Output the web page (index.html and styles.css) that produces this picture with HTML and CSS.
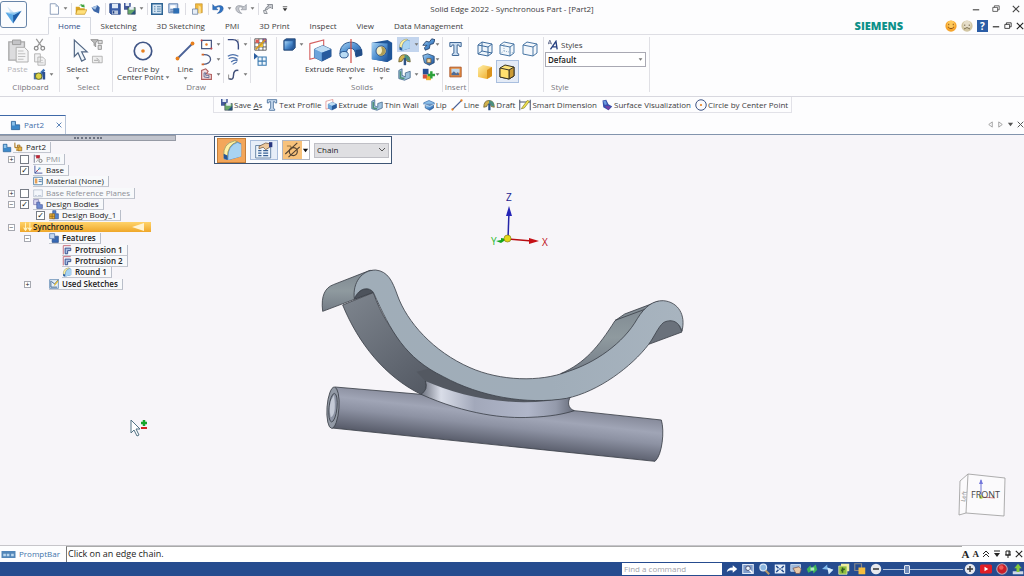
FILE: index.html
```html
<!DOCTYPE html>
<html lang="en">
<head>
<meta charset="utf-8">
<title>Solid Edge 2022 - Synchronous Part - [Part2]</title>
<link rel="stylesheet" href="styles.css">
</head>
<body>
<svg class="defs" aria-hidden="true">
  <defs>
    <linearGradient id="blue" x1="0" y1="0" x2="1" y2="1"><stop offset="0" stop-color="#a9d4f3"/><stop offset=".5" stop-color="#4f8fd0"/><stop offset="1" stop-color="#1d4f96"/></linearGradient>
    <linearGradient id="gold" x1="0" y1="0" x2="1" y2="1"><stop offset="0" stop-color="#fff0a8"/><stop offset="1" stop-color="#eda41c"/></linearGradient>
    <linearGradient id="tubeFill" gradientUnits="userSpaceOnUse" x1="560" y1="664" x2="545" y2="796"><stop offset="0" stop-color="#878b9b"/><stop offset=".3" stop-color="#a0a5b6"/><stop offset=".55" stop-color="#8d92a3"/><stop offset="1" stop-color="#585c6a"/></linearGradient>
    <linearGradient id="faceFill" x1="0" y1="0" x2="1" y2="0"><stop offset="0" stop-color="#a0adb8"/><stop offset=".6" stop-color="#a0adb9"/><stop offset="1" stop-color="#a8b4bf"/></linearGradient>
    <linearGradient id="curlFill" x1="0" y1="0" x2="0" y2="1"><stop offset="0" stop-color="#7d8790"/><stop offset=".5" stop-color="#8f9a9f"/><stop offset="1" stop-color="#737b86"/></linearGradient>
    <linearGradient id="underFill" x1="0" y1="0" x2="1" y2="1"><stop offset="0" stop-color="#7f868f"/><stop offset=".6" stop-color="#5f656f"/><stop offset="1" stop-color="#4b505a"/></linearGradient>
    <linearGradient id="filletFill" x1="0" y1="0" x2="1" y2="0"><stop offset="0" stop-color="#6b707d"/><stop offset=".13" stop-color="#d9dde8"/><stop offset=".35" stop-color="#a2a8ba"/><stop offset=".7" stop-color="#b0b6c9"/><stop offset=".88" stop-color="#949aab"/><stop offset="1" stop-color="#666b79"/></linearGradient>
  </defs>
  <symbol id="i-app" viewBox="0 0 26 26"><path d="M5 3l8 7-3 3z" fill="#cfe4f5"/><path d="M3 10l10 2-1 11z" fill="#5aa9e6"/><path d="M12 12l10-4-10 15z" fill="#1e5ea9"/><path d="M3 10l10 3 9-5-9 2z" fill="#8cc6ef"/></symbol>
  <symbol id="i-new" viewBox="0 0 16 16"><path d="M3 1h7l4 4v10H3z" fill="#fff" stroke="#6f84a5"/><path d="M10 1v4h4z" fill="#aebfd6"/></symbol>
  <symbol id="i-open" viewBox="0 0 16 16"><path d="M1 5h5l1 2h6v8H1z" fill="#d9a321"/><path d="M3 9h13l-3 6H1z" fill="#ffe07a" stroke="#b98410" stroke-width=".7"/><path d="M5 4q3-4 6-1l1-2 1 5-5-1 1-1q-2-2-4 0z" fill="#3aa23c"/></symbol>
  <symbol id="i-blob" viewBox="0 0 16 16"><path d="M2 6l8-3 3 3-1 8-7-3z" fill="#3b66a8"/><path d="M2 6l8-3-3 6z" fill="#a9c5e6"/></symbol>
  <symbol id="i-save" viewBox="0 0 16 16"><path d="M1 1h14v14H3l-2-2z" fill="#3c5fa8" stroke="#1d3b7c"/><path d="M4 1h8v6H4z" fill="#dfe9f6"/><path d="M4 10h8v5H4z" fill="#b9c7dd"/><path d="M5 11h2v3H5z" fill="#1d3b7c"/></symbol>
  <symbol id="i-saveas" viewBox="0 0 16 16"><path d="M0 0h9v9H0z" fill="#43599a"/><path d="M2 0h5v4H2z" fill="#e3ebf6"/><path d="M5 6h10v9H5z" fill="#67a86a" stroke="#335" stroke-width=".7"/><path d="M7 5h6v4H7z" fill="#e8eef7"/><path d="M9 15l6-6v6z" fill="#28547e"/></symbol>
  <symbol id="i-list" viewBox="0 0 16 16"><path d="M1 1h14v14H1z" fill="#d7e7f4" stroke="#2f6595" stroke-width="2"/><path d="M4 5h2M8 5h5M4 8h2M8 8h5M4 11h2M8 11h5" stroke="#2f6595"/></symbol>
  <symbol id="i-print" viewBox="0 0 16 16"><path d="M1 1h12v12H1z" fill="#c3d5ee" stroke="#46699e"/><path d="M3 3h7v4H3z" fill="#fff"/><path d="M7 7h8v7H7z" fill="#2d6fb5"/><path d="M3 9h6M3 11h6" stroke="#46699e"/></symbol>
  <symbol id="i-book" viewBox="0 0 16 16"><path d="M6 1h9v12H6z" fill="#f2bb3e" stroke="#b57a14" stroke-width=".7"/><path d="M2 8h7v7H2z" fill="#e6eef8" stroke="#687f9e"/><path d="M10 3l3 2v10l-3-2z" fill="#fbe09a"/></symbol>
  <symbol id="i-undo" viewBox="0 0 16 16"><path d="M1 2v7h7L5.500 6.500Q11 3 11 8q0 3-4 6 8-1 8-7-1-6-11-2z" fill="#2f74c4" stroke="#1d4c90" stroke-width=".6"/></symbol>
  <symbol id="i-redo" viewBox="0 0 16 16"><path d="M15 2v7H8l2.500-2.500Q5 3 5 8q0 3 4 6-8-1-8-7 1-6 11-2z" fill="#c5c8ce" stroke="#858a93" stroke-width=".8"/></symbol>
  <symbol id="i-repeat" viewBox="0 0 16 16"><path d="M7 2h7v6l-2-2q-4 0-5 3H4q2-5 5-5z" fill="#c9ccd1" stroke="#70757e"/><path d="M2 10h3l2 4H3z" fill="#e4e5e8" stroke="#70757e"/></symbol>
  <symbol id="i-paste" viewBox="0 0 24 26"><path d="M2 3h17v20H2z" fill="#dcdcde" stroke="#aaa" stroke-width="1.500"/><path d="M6 1h9v5H6z" fill="#c4c4c7" stroke="#999"/><path d="M10 9h9l4 4v12H10z" fill="#f4f4f5" stroke="#aaa"/><path d="M12 13h6M12 16h8M12 19h8M12 22h6" stroke="#bbb"/></symbol>
  <symbol id="i-cut" viewBox="0 0 16 16"><path d="M4 1l7 10M12 1L5 11" stroke="#999" stroke-width="1.500"/><circle cx="4" cy="12.500" r="2.300" fill="none" stroke="#888" stroke-width="1.500"/><circle cx="12" cy="12.500" r="2.300" fill="none" stroke="#888" stroke-width="1.500"/></symbol>
  <symbol id="i-copy" viewBox="0 0 16 16"><path d="M2 1h7v10H2zM6 5h6l3 3v7H6z" fill="#f2f2f3" stroke="#aaa"/><path d="M8 9h4M8 12h5" stroke="#bbb"/></symbol>
  <symbol id="i-painter" viewBox="0 0 16 16"><path d="M1 6h10v8H1z" fill="#4b6da8"/><circle cx="7" cy="10" r="4" fill="#ddd448" stroke="#556017"/><path d="M9 5l4-4 2 2-5 5z" fill="#3f73b8"/><path d="M11 5h4v9h-3z" fill="#2c4f8f"/></symbol>
  <symbol id="i-arrow" viewBox="0 0 24 30"><path d="M8 3v18l4-4 4 9 4-2-4-8h6z" fill="#f1f6fb" stroke="#526784" stroke-width="1.300"/></symbol>
  <symbol id="i-filter" viewBox="0 0 16 16"><path d="M1 2h9L7 6v5L5 9V6z" fill="#bbb" stroke="#888"/><path d="M10 3h5v4h-5zM10 9h4v5h-4z" fill="#ddd" stroke="#888"/></symbol>
  <symbol id="i-box" viewBox="0 0 16 16"><path d="M3 4h12v8H3z" fill="#eee" stroke="#aaa"/><path d="M5 9h5M8 6l3 3v3" stroke="#999" fill="none"/></symbol>
  <symbol id="i-circle" viewBox="0 0 24 24"><circle cx="12" cy="12" r="10.500" fill="#fbfbfd" stroke="#3f5586" stroke-width="2"/><circle cx="12" cy="12" r="2.200" fill="#e8801e"/></symbol>
  <symbol id="i-line" viewBox="0 0 24 24"><path d="M3 21L21 3" stroke="#4b6297" stroke-width="2.200"/><circle cx="3" cy="21" r="2.300" fill="#e8801e"/><circle cx="21" cy="3" r="2.300" fill="#e8801e"/></symbol>
  <symbol id="i-rect" viewBox="0 0 16 16"><path d="M2 3h12v10H2z" fill="#fff" stroke="#4a5a85" stroke-width="1.500"/><circle cx="8" cy="8" r="1.500" fill="#e77a28"/><circle cx="2" cy="3" r="1.300" fill="#c44"/><circle cx="14" cy="13" r="1.300" fill="#c44"/></symbol>
  <symbol id="i-arc" viewBox="0 0 16 16"><path d="M4 2c12-1 12 12 0 12" fill="none" stroke="#4a5a85" stroke-width="1.600"/><path d="M2 2h3M2 14h3" stroke="#d3682c" stroke-width="2"/></symbol>
  <symbol id="i-poly" viewBox="0 0 16 16"><path d="M2 14V3l5-2 3 3-2 3 6 1v6z" fill="#f3dfe0" stroke="#b05d5d" stroke-width="1.400"/><path d="M5 11V6h2v3h4v3z" fill="none" stroke="#4a5a85"/></symbol>
  <symbol id="i-fillet" viewBox="0 0 16 16"><path d="M1 2h6q7 0 7 7v5" fill="none" stroke="#384a80" stroke-width="1.700"/><path d="M10 2h4v4" fill="none" stroke="#888" stroke-dasharray="1 1"/></symbol>
  <symbol id="i-offset" viewBox="0 0 16 16"><path d="M1 4q6-4 13 0M2 7q6-3 11 1M5 11q5-4 8-1M7 14l5-3" fill="none" stroke="#4d71ab" stroke-width="1.400"/></symbol>
  <symbol id="i-curve" viewBox="0 0 16 16"><path d="M2 13q6 3 6-4t6-6" fill="none" stroke="#404f78" stroke-width="1.800"/><path d="M2 8v5h3" fill="none" stroke="#777"/></symbol>
  <symbol id="i-grid" viewBox="0 0 16 16"><path d="M1 1h14v14H1zM1 6h14M1 11h14M6 1v14M11 1v14" fill="#fff" stroke="#444"/><path d="M2 2h4v4H2z" fill="#e05a52"/><path d="M7 7h4v4H7z" fill="#efc32e"/><path d="M11 1h4v4h-4z" fill="#7a3fb0"/><path d="M2 14L14 2" stroke="#d39a22" stroke-width="2"/></symbol>
  <symbol id="i-table" viewBox="0 0 16 16"><path d="M5 5h10v10H5zM5 10h10M10 5v10" fill="#eff6fc" stroke="#3979b0" stroke-width="1.300"/><path d="M0 0v8l5-4z" fill="#2b5ea0"/></symbol>
  <symbol id="i-cubeb" viewBox="0 0 16 16"><path d="M1 3l3-2h11v11l-3 3H1z" fill="#2c5f9e" stroke="#173c6d"/><path d="M2 4h10v10H2z" fill="url(#blue)"/></symbol>
  <symbol id="i-lip" viewBox="0 0 16 16"><path d="M1 5l7-3 7 3v2H1z" fill="#8cc0ea" stroke="#285b9d" stroke-width=".8"/><path d="M3 8h11v4l-5 3-6-3z" fill="url(#blue)" stroke="#234e86" stroke-width=".8"/><path d="M1 7l8 3 6-3" fill="none" stroke="#dcebf7"/></symbol>
  <symbol id="i-extrude" viewBox="0 0 26 26"><path d="M2 5l15-4v17L2 22z" fill="#fff" stroke="#d46060" stroke-width="1.200"/><path d="M7 11l9-4 9 4v8l-10 5-8-4z" fill="url(#blue)" stroke="#234e86" stroke-width=".8"/><path d="M7 11l9-4 9 4-10 4z" fill="#bddcf3"/><path d="M7 11l8 4v9l-8-4z" fill="#6ca5dc"/><path d="M15 15v9l10-5v-8z" fill="#285b9d"/></symbol>
  <symbol id="i-revolve" viewBox="0 0 26 26"><path d="M1 16C1 5 10 2 17 4q8 3 8 13l-7 1q0-8-6-8-4 0-4 7z" fill="url(#blue)" stroke="#24508a"/><ellipse cx="5.500" cy="17" rx="4.500" ry="3.500" fill="#b9dbf4" stroke="#24508a"/><path d="M18 12l7-1v7l-7 2z" fill="#234e88"/><path d="M13 0v26" stroke="#d34c43" stroke-width="1.300"/></symbol>
  <symbol id="i-hole" viewBox="0 0 26 26"><path d="M2 4l17-3 5 3v18l-5 3-17-3z" fill="#1f5598"/><path d="M2 4l17 1v20L2 22z" fill="url(#blue)"/><circle cx="12" cy="13" r="5.500" fill="#f4edc2" stroke="#2a4e83"/><path d="M12 8a5 5 0 1 1-3 9q6-1 3-9" fill="#ae9c55"/></symbol>
  <symbol id="i-round" viewBox="0 0 24 24"><path d="M3 22V14Q4 3 16 2l6 3v14L9 23z" fill="url(#blue)"/><path d="M3 18Q2 5 15 2l3 1Q7 6 7 20z" fill="#fff2a6" stroke="#a09048" stroke-width=".8"/><path d="M3 16l4 2v5l-4-2z" fill="#255697"/><path d="M8 20Q8 7 18 4l4 2v13L8 23z" fill="#a8d3f2"/></symbol>
  <symbol id="i-draft" viewBox="0 0 16 16"><path d="M1 11Q1 2 8 2t7 9l-4-1q0-3-3-3t-3 3z" fill="#d2b24c" stroke="#665c2d"/><path d="M8 2q7 0 7 8l-4-1q0-3-3-3z" fill="#4c9080"/><path d="M7 6h3v9H7z" fill="#2e5488"/></symbol>
  <symbol id="i-thin" viewBox="0 0 16 16"><path d="M1 3l4-2v8l4 2V6l6-2v8l-7 3-7-2z" fill="#9ec2de" stroke="#43688d"/><path d="M3 4v8l5 1" fill="none" stroke="#4f9277" stroke-width="2"/></symbol>
  <symbol id="i-sweep" viewBox="0 0 16 16"><path d="M1 9l4-5 4 1 3-4 4 1-2 5-4 1-1 5-5 2-1-3 3-3z" fill="url(#blue)" stroke="#1d3a64"/></symbol>
  <symbol id="i-pattern" viewBox="0 0 16 16"><path d="M1 3l6-2 8 3v8l-6 3-6-3z" fill="url(#blue)" stroke="#29496f"/><path d="M6 7h5v5H6z" fill="#efd8a5" stroke="#765631"/></symbol>
  <symbol id="i-add" viewBox="0 0 16 16"><path d="M1 1h7v7H1z" fill="#274f96"/><path d="M5 9h6v6H5z" fill="#ebb22c"/><path d="M10 4h3v3h3v3h-3v3h-3v-3H7V7h3z" fill="#2ba13b"/><path d="M1 8h5v5H1z" fill="#d9513f"/></symbol>
  <symbol id="i-text" viewBox="0 0 16 18"><path d="M1 1h14v5h-2L12 4h-2v10l2 1v2H4v-2l2-1V4H4L3 6H1z" fill="#c9dcf0" stroke="#3e6694" stroke-width="1.200"/></symbol>
  <symbol id="i-picture" viewBox="0 0 16 16"><path d="M1 2h14v12H1z" fill="#e98e40" stroke="#a44d20"/><path d="M3 4h10v5H3z" fill="#bcd8ef"/><path d="M3 10l3-3 3 3 2-2 2 4H3z" fill="#4c6d9b"/></symbol>
  <symbol id="i-wire1" viewBox="0 0 16 16"><path d="M1 4l4-3 10 2v9l-4 3-10-2zM1 4l10 2v9M11 6l4-3M5 1v9l-4 3M5 10l10 2" fill="#eef5fb" stroke="#3f6c9d"/></symbol>
  <symbol id="i-wire2" viewBox="0 0 16 16"><path d="M1 4l4-3 10 2v9l-4 3-10-2zM1 4l10 2v9M11 6l4-3" fill="#f2f7fb" stroke="#4976a4"/><path d="M5 1v9l-4 3M5 10l10 2" fill="none" stroke="#92afcb" stroke-dasharray="1 1"/></symbol>
  <symbol id="i-wire3" viewBox="0 0 16 16"><path d="M1 4l4-3 10 2v9l-4 3-10-2zM1 4l10 2v9M11 6l4-3" fill="#f5f8fc" stroke="#4976a4"/></symbol>
  <symbol id="i-gold" viewBox="0 0 16 16"><path d="M1 4l5-3 9 2v9l-5 3-9-2z" fill="url(#gold)"/><path d="M10 6l5-3v9l-5 3z" fill="#d9921d"/></symbol>
  <symbol id="i-goldedge" viewBox="0 0 16 16"><path d="M1 4l5-3 9 2v9l-5 3-9-2z" fill="#fce379" stroke="#383426"/><path d="M10 6l5-3v9l-5 3z" fill="#cb9b35" stroke="#383426"/><path d="M1 4l9 2v9l-9-2z" fill="#ffdf6e" stroke="#383426"/></symbol>
  <symbol id="i-styles" viewBox="0 0 18 16"><path d="M0 7L3 0l3 7M1 5h4" fill="none" stroke="#48547a" stroke-width="1.300"/><path d="M4 15l9-13 2 13M7 11h8" fill="none" stroke="#253f80" stroke-width="2.200"/></symbol>
  <symbol id="i-dim" viewBox="0 0 16 16"><path d="M1 1v14M15 1v14M1 4h14" stroke="#414c68" stroke-width="1.300"/><path d="M3 13L11 2l3 1-7 9z" fill="#f3e34c" stroke="#8d8831"/></symbol>
  <symbol id="i-visual" viewBox="0 0 16 16"><path d="M2 2l5-1 3 6 5 3-5 5-7-4z" fill="#3651ad"/><path d="M5 9l8 1-3 5z" fill="#7542a3"/><path d="M3 3l3-1 2 5-3 1z" fill="#6b9bdd"/></symbol>
  <symbol id="i-part" viewBox="0 0 16 16"><path d="M2 2h6v5h6v7H2z" fill="#3d88c9" stroke="#20588f"/><path d="M3 3h4v5H3z" fill="#8fc3ea"/></symbol>
  <symbol id="i-lock" viewBox="0 0 16 16"><path d="M3 1v8h4V5h4v8H5" fill="#f6d47f" stroke="#a36d18" stroke-width="1.500"/><path d="M8 8h6v6H8z" fill="#ecb640" stroke="#8b5c16"/></symbol>
  <symbol id="i-body" viewBox="0 0 16 16"><path d="M6 1h5v5h4v8H6z" fill="#5485cd" stroke="#2c4f94"/><path d="M1 6h8v8H1z" fill="#eab33a" stroke="#80591a"/><path d="M1 10h8M5 6v8" stroke="#80591a"/></symbol>
  <symbol id="i-pmi" viewBox="0 0 16 16"><path d="M2 1v13M2 3h9" stroke="#70758c" stroke-width="1.500"/><path d="M5 2h6v5H5z" fill="#bd2636"/><circle cx="12" cy="11" r="2.500" fill="none" stroke="#777" stroke-width="1.500"/><path d="M5 13l6-8" stroke="#888"/></symbol>
  <symbol id="i-base" viewBox="0 0 16 16"><path d="M3 1v12h12M3 13l7-7" fill="none" stroke="#4a58a0" stroke-width="1.500"/><path d="M9 4h3v3H9z" fill="#5aa4c9"/><path d="M6 8h2v2H6z" fill="#c84f61"/></symbol>
  <symbol id="i-mat" viewBox="0 0 16 16"><path d="M1 2h14v12H1z" fill="#fff" stroke="#5583a9" stroke-width="1.500"/><path d="M3 4h4v8H3z" fill="#e5a056"/><path d="M9 6h5M9 9h5" stroke="#4070a0" stroke-width="1.500"/></symbol>
  <symbol id="i-plane" viewBox="0 0 16 16"><path d="M1 3h14v11H1z" fill="#f3f6fb" stroke="#a5b0c3"/><path d="M3 12h3M8 12h5" stroke="#a5b0c3"/></symbol>
  <symbol id="i-bodies" viewBox="0 0 16 16"><path d="M1 1h8v8H1z" fill="#dad7f0" stroke="#6f67a8"/><path d="M6 5h5v4h4v6H6z" fill="#6f8bd0" stroke="#3e4f95"/></symbol>
  <symbol id="i-feat" viewBox="0 0 16 16"><path d="M1 1h8v8H1z" fill="#c7d8ef" stroke="#315fa3"/><path d="M5 10h5V5h5v10H5z" fill="#3769b6" stroke="#214580"/></symbol>
  <symbol id="i-prot" viewBox="0 0 16 16"><path d="M14 1H2v14" fill="#f0f1fa" stroke="#c66a78" stroke-width="1.500"/><path d="M5 5h9v4H9v5H5z" fill="#a9bfe4" stroke="#334e8c" stroke-width="1.500"/></symbol>
  <symbol id="i-sketch" viewBox="0 0 16 16"><path d="M1 1h14v14H1z" fill="#e5eff8" stroke="#396b9e"/><path d="M3 3v10h10M4 4l5 4 6-7" fill="none" stroke="#284f7c" stroke-width="1.300"/><path d="M8 9l6-7 1 2-6 7z" fill="#e8be34"/></symbol>
  <symbol id="i-sync" viewBox="0 0 16 16"><path d="M4 1v10M11 1v10M1 9l3 5 3-5M8 9l3 5 3-5" fill="#fff4c4" stroke="#fff4c4" stroke-width="1.500"/></symbol>
  <symbol id="i-options" viewBox="0 0 24 20"><path d="M2 4h18v15H2z" fill="#eef5fc" stroke="#55769b"/><path d="M5 10h4M11 10h6M5 13h4M11 13h6M5 16h4M11 16h6" stroke="#396295" stroke-width="1.500"/><path d="M6 5l8-4 5 1v4l-5 3-3-3-5 2z" fill="#edc99d" stroke="#5d4530" stroke-width=".8"/><path d="M18 0h4v6h-4z" fill="#29377f"/></symbol>
  <symbol id="i-select-chain" viewBox="0 0 20 20"><path d="M1 15L16 1M5 19L19 6" stroke="#554432" stroke-width="1.400"/><circle cx="11" cy="12" r="5" fill="none" stroke="#554432" stroke-width="1.500"/><path d="M3 5h5v5" fill="none" stroke="#82602f"/></symbol>
  <symbol id="i-smile" viewBox="0 0 16 16"><circle cx="8" cy="8" r="7.500" fill="#f6a52d"/><circle cx="8" cy="6" r="5" fill="#ffc95a"/><path d="M4 9q4 5 8 0M5 5v2M11 5v2" fill="none" stroke="#8b4e12" stroke-width="1.300"/></symbol>
  <symbol id="i-frown" viewBox="0 0 16 16"><circle cx="8" cy="8" r="7.500" fill="#d2c6a2"/><circle cx="8" cy="6" r="5" fill="#e6deca"/><path d="M4 12q4-4 8 0M5 6v2M11 6v2" fill="none" stroke="#7a6e50" stroke-width="1.300"/></symbol>
  <symbol id="i-min" viewBox="0 0 10 10"><path d="M1 6h8" stroke="currentColor" stroke-width="1.400"/></symbol>
  <symbol id="i-restore" viewBox="0 0 10 10"><path d="M3 3V1h6v5H7M1 3h6v5H1z" fill="none" stroke="currentColor"/></symbol>
  <symbol id="i-x" viewBox="0 0 10 10"><path d="M1 1l8 8M9 1L1 9" stroke="currentColor" stroke-width="1.400"/></symbol>
  <symbol id="i-caret" viewBox="0 0 8 8"><path d="M1 2h6L4 6z" fill="currentColor"/></symbol>
  <symbol id="i-left" viewBox="0 0 8 8"><path d="M6 1v6L2 4z" fill="none" stroke="#999"/></symbol>
  <symbol id="i-right" viewBox="0 0 8 8"><path d="M2 1v6l4-3z" fill="none" stroke="#999"/></symbol>
  <symbol id="i-overflow" viewBox="0 0 8 8"><path d="M1 1h6" stroke="currentColor"/><path d="M1 3h6L4 7z" fill="currentColor"/></symbol>
  <symbol id="i-up2" viewBox="0 0 8 8"><path d="M1 4l3-3 3 3M1 7l3-3 3 3" fill="none" stroke="#222"/></symbol>
  <symbol id="i-pin" viewBox="0 0 8 8"><path d="M2 1h4v4H2zM1 5h6M4 5v3M5 1v4" fill="none" stroke="#222"/></symbol>
  <symbol id="i-prompt" viewBox="0 0 16 8"><path d="M0 0h16v8H0z" fill="#5386b8"/><path d="M2 3h3v3H2zM6 3h3v3H6zM11 3h3v3h-3z" fill="#b9d6ee"/></symbol>
  <symbol id="i-go" viewBox="0 0 16 16"><path d="M1 12q1-6 8-6V3l6 5-6 5v-3q-5-1-8 2z" fill="#fff"/></symbol>
  <symbol id="i-zoomarea" viewBox="0 0 16 16"><path d="M1 2h14v12H1z" fill="#7f9ccb" stroke="#dfe8f5" stroke-width="1.500"/><circle cx="8" cy="7" r="3" fill="#e9f2fb" stroke="#335"/><path d="M10 9l4 4" stroke="#fff" stroke-width="2"/></symbol>
  <symbol id="i-zoom" viewBox="0 0 16 16"><circle cx="7" cy="6" r="4.500" fill="#8db7df" stroke="#dce9f6" stroke-width="1.500"/><path d="M10 10l5 5" stroke="#ba9b68" stroke-width="2.500"/></symbol>
  <symbol id="i-fit" viewBox="0 0 16 16"><path d="M1 2h14v12H1z" fill="#e6eff9"/><path d="M3 4l3 3M13 4l-3 3M3 12l3-3M13 12l-3-3" stroke="#234b8d" stroke-width="2"/><path d="M7 7h2v2H7z" fill="#234b8d"/></symbol>
  <symbol id="i-pan" viewBox="0 0 16 16"><path d="M1 2h13v9H1z" fill="#9db9dc" stroke="#e4edf8"/><path d="M4 7l8-2 3 3-2 6H8z" fill="#e9c8a5" stroke="#755"/></symbol>
  <symbol id="i-rotate" viewBox="0 0 16 16"><path d="M1 8l5-5 1 4 6-5 2 7-5 5-1-4-6 3z" fill="#3fb559"/><path d="M6 6h5v4H6z" fill="#b4eac0"/></symbol>
  <symbol id="i-spin" viewBox="0 0 16 16"><path d="M0 8l7-6v4l8 3-6 6V9z" fill="#82bbed"/><path d="M7 6l8 3-6 6z" fill="#d5eafa"/></symbol>
  <symbol id="i-view" viewBox="0 0 16 16"><path d="M4 1h11v10H4z" fill="#f1ee9e"/><path d="M1 4h11v11H1z" fill="#8fbf3e" stroke="#e9eeb0"/><path d="M6 6v7M4 10l5-2" stroke="#315d25" stroke-width="2"/></symbol>
  <symbol id="i-layers" viewBox="0 0 16 16"><path d="M1 1h9v9H1z" fill="none" stroke="#888" stroke-width="1.500"/><path d="M6 6h9v9H6z" fill="#f5bd3f"/></symbol>
  <symbol id="i-minus" viewBox="0 0 16 16"><circle cx="8" cy="8" r="7" fill="#e6e8ed"/><path d="M4 8h8" stroke="#333" stroke-width="2"/></symbol>
  <symbol id="i-plus" viewBox="0 0 16 16"><circle cx="8" cy="8" r="7" fill="#e6e8ed"/><path d="M4 8h8M8 4v8" stroke="#333" stroke-width="2"/></symbol>
  <symbol id="i-video" viewBox="0 0 16 16"><rect y="2" width="16" height="12" rx="2" fill="#e11e26"/><path d="M6 5v6l5-3z" fill="#fff"/></symbol>
  <symbol id="i-record" viewBox="0 0 16 16"><circle cx="8" cy="8" r="7" fill="#c91f29" stroke="#b6a7b5" stroke-width="1.500"/><circle cx="7" cy="6" r="3" fill="#ef5a55"/></symbol>
  <symbol id="i-upload" viewBox="0 0 16 16"><path d="M1 11h14v4H1z" fill="#cfd9e7"/><path d="M8 1l5 6h-3v5H6V7H3z" fill="#83c83d"/></symbol>
</svg>

<header class="titlebar">
  <button class="app-button" aria-label="Application menu"><svg><use href="#i-app"/></svg></button>
  <nav class="quick" aria-label="Quick access">
    <button class="mini" aria-label="New"><svg><use href="#i-new"/></svg></button><svg class="caret"><use href="#i-caret"/></svg><i class="bar"></i>
    <button class="mini" aria-label="Open"><svg><use href="#i-open"/></svg></button>
    <button class="mini" aria-label="Recent"><svg><use href="#i-blob"/></svg></button><i class="bar"></i>
    <button class="mini" aria-label="Save"><svg><use href="#i-save"/></svg></button>
    <button class="mini" aria-label="Save as"><svg><use href="#i-saveas"/></svg></button><svg class="caret"><use href="#i-caret"/></svg><i class="bar"></i>
    <button class="mini" aria-label="Properties"><svg><use href="#i-list"/></svg></button>
    <button class="mini wide" aria-label="Print"><svg><use href="#i-print"/></svg></button><i class="bar"></i>
    <button class="mini wide" aria-label="Library"><svg><use href="#i-book"/></svg></button><i class="bar"></i>
    <button class="mini" aria-label="Undo"><svg><use href="#i-undo"/></svg></button><svg class="caret"><use href="#i-caret"/></svg>
    <button class="mini" aria-label="Redo"><svg><use href="#i-redo"/></svg></button><svg class="caret"><use href="#i-caret"/></svg><i class="bar"></i>
    <button class="mini" aria-label="Repeat"><svg><use href="#i-repeat"/></svg></button>
    <button class="mini wide" aria-label="Customize"><svg class="caret"><use href="#i-overflow"/></svg></button>
  </nav>
  <h1 class="title">Solid Edge 2022 - Synchronous Part - [Part2]</h1>
  <div class="window-buttons">
    <button aria-label="Minimize"><svg><use href="#i-min"/></svg></button><button aria-label="Restore"><svg><use href="#i-restore"/></svg></button><button aria-label="Close"><svg><use href="#i-x"/></svg></button>
  </div>
</header>

<div class="tabrow">
  <nav class="tabs" aria-label="Ribbon tabs">
    <button class="tab active">Home</button><button class="tab">Sketching</button><button class="tab">3D Sketching</button><button class="tab">PMI</button><button class="tab">3D Print</button><button class="tab">Inspect</button><button class="tab">View</button><button class="tab">Data Management</button>
  </nav>
  <span class="brand">SIEMENS</span>
  <div class="help">
    <button class="face" aria-label="Like"><svg><use href="#i-smile"/></svg></button><button class="face" aria-label="Dislike"><svg><use href="#i-frown"/></svg></button><button class="question" aria-label="Help">?</button>
    <button aria-label="Minimize document"><svg><use href="#i-min"/></svg></button><button aria-label="Restore document"><svg><use href="#i-restore"/></svg></button><button aria-label="Close document"><svg><use href="#i-x"/></svg></button>
  </div>
</div>

<section class="ribbon" aria-label="Home ribbon">
  <div class="group clipboard">
    <div class="tools">
      <button class="big disabled"><svg><use href="#i-paste"/></svg><span>Paste</span></button>
      <div class="stack">
        <button class="small" aria-label="Cut"><svg><use href="#i-cut"/></svg></button>
        <button class="small" aria-label="Copy"><svg><use href="#i-copy"/></svg></button>
        <button class="small" aria-label="Format painter"><svg><use href="#i-painter"/></svg><svg class="caret"><use href="#i-caret"/></svg></button>
      </div>
    </div>
    <span class="caption">Clipboard</span>
  </div>
  <div class="group selection">
    <div class="tools">
      <button class="big"><svg><use href="#i-arrow"/></svg><span>Select</span><svg class="caret"><use href="#i-caret"/></svg></button>
      <div class="stack">
        <button class="small" aria-label="Filter"><svg><use href="#i-filter"/></svg></button>
        <button class="small" aria-label="Selection box"><svg><use href="#i-box"/></svg></button>
      </div>
    </div>
    <span class="caption">Select</span>
  </div>
  <div class="group draw">
    <div class="tools">
      <button class="big double"><svg><use href="#i-circle"/></svg><span>Circle by</span><span class="second">Center Point<svg class="caret"><use href="#i-caret"/></svg></span></button>
      <button class="big"><svg><use href="#i-line"/></svg><span>Line</span><svg class="caret"><use href="#i-caret"/></svg></button>
      <div class="stack">
        <button class="small" aria-label="Rectangle"><svg><use href="#i-rect"/></svg><svg class="caret"><use href="#i-caret"/></svg></button>
        <button class="small" aria-label="Arc"><svg><use href="#i-arc"/></svg><svg class="caret"><use href="#i-caret"/></svg></button>
        <button class="small" aria-label="Polygon"><svg><use href="#i-poly"/></svg><svg class="caret"><use href="#i-caret"/></svg></button>
      </div>
      <div class="stack ruled">
        <button class="small" aria-label="Fillet"><svg><use href="#i-fillet"/></svg><svg class="caret"><use href="#i-caret"/></svg></button>
        <button class="small" aria-label="Offset"><svg><use href="#i-offset"/></svg></button>
        <button class="small" aria-label="Curve"><svg><use href="#i-curve"/></svg><svg class="caret"><use href="#i-caret"/></svg></button>
      </div>
      <div class="stack ruled">
        <button class="small" aria-label="Grid"><svg><use href="#i-grid"/></svg></button>
        <button class="small" aria-label="Origin"><svg><use href="#i-table"/></svg></button>
      </div>
    </div>
    <span class="caption">Draw</span>
  </div>
  <div class="group solids">
    <div class="tools">
      <div class="stack"><button class="small" aria-label="Primitive"><svg><use href="#i-cubeb"/></svg><svg class="caret"><use href="#i-caret"/></svg></button></div>
      <button class="big"><svg><use href="#i-extrude"/></svg><span>Extrude</span></button>
      <button class="big"><svg><use href="#i-revolve"/></svg><span>Revolve</span><svg class="caret"><use href="#i-caret"/></svg></button>
      <button class="big"><svg><use href="#i-hole"/></svg><span>Hole</span><svg class="caret"><use href="#i-caret"/></svg></button>
      <div class="stack">
        <button class="small on" aria-label="Round"><svg><use href="#i-round"/></svg><svg class="caret"><use href="#i-caret"/></svg></button>
        <button class="small" aria-label="Draft"><svg><use href="#i-draft"/></svg></button>
        <button class="small" aria-label="Thin wall"><svg><use href="#i-thin"/></svg><svg class="caret"><use href="#i-caret"/></svg></button>
      </div>
      <div class="stack tight">
        <button class="small" aria-label="Sweep"><svg><use href="#i-sweep"/></svg><svg class="caret"><use href="#i-caret"/></svg></button>
        <button class="small" aria-label="Pattern"><svg><use href="#i-pattern"/></svg><svg class="caret"><use href="#i-caret"/></svg></button>
        <button class="small" aria-label="Add body"><svg><use href="#i-add"/></svg><svg class="caret"><use href="#i-caret"/></svg></button>
      </div>
    </div>
    <span class="caption">Solids</span>
  </div>
  <div class="group insert">
    <div class="tools pair">
      <button class="glyph" aria-label="Text"><svg><use href="#i-text"/></svg></button>
      <button class="glyph" aria-label="Image"><svg><use href="#i-picture"/></svg></button>
    </div>
    <span class="caption">Insert</span>
  </div>
  <div class="group views">
    <div class="tools cubes">
      <button class="glyph" aria-label="Wireframe"><svg><use href="#i-wire1"/></svg></button>
      <button class="glyph" aria-label="Hidden edges"><svg><use href="#i-wire2"/></svg></button>
      <button class="glyph" aria-label="Visible edges"><svg><use href="#i-wire3"/></svg></button>
      <button class="glyph" aria-label="Shaded"><svg><use href="#i-gold"/></svg></button>
      <button class="glyph chosen" aria-label="Shaded with edges"><svg><use href="#i-goldedge"/></svg></button>
    </div>
  </div>
  <div class="group styles">
    <div class="tools column">
      <label class="style-label" for="style"><svg><use href="#i-styles"/></svg>Styles</label>
      <span class="picker"><select id="style"><option>Default</option></select><svg class="caret"><use href="#i-caret"/></svg></span>
    </div>
    <span class="caption">Style</span>
  </div>
</section>

<nav class="commands" aria-label="Commands">
  <div class="command-strip">
    <button><svg><use href="#i-saveas"/></svg>Save&nbsp;<u>A</u>s</button>
    <button><svg><use href="#i-text"/></svg>Text Profile</button>
    <button><svg><use href="#i-extrude"/></svg>Extrude</button>
    <button><svg><use href="#i-thin"/></svg>Thin Wall</button>
    <button><svg><use href="#i-lip"/></svg>Lip</button>
    <button><svg><use href="#i-line"/></svg>Line</button>
    <button><svg><use href="#i-draft"/></svg>Draft</button>
    <button><svg><use href="#i-dim"/></svg>Smart Dimension</button>
    <button><svg><use href="#i-visual"/></svg>Surface Visualization</button>
    <button><svg><use href="#i-circle"/></svg>Circle by Center Point</button>
  </div>
</nav>

<div class="doc-row">
  <div class="doc-tab"><svg><use href="#i-part"/></svg><span>Part2</span><button aria-label="Close Part2"><svg><use href="#i-x"/></svg></button></div>
  <div class="doc-nav">
    <button aria-label="Previous"><svg><use href="#i-left"/></svg></button><button aria-label="Next"><svg><use href="#i-right"/></svg></button><button aria-label="List"><svg><use href="#i-caret"/></svg></button><button aria-label="Close"><svg><use href="#i-x"/></svg></button>
  </div>
</div>

<main class="workspace">
  <svg class="canvas" viewBox="0 0 1024 410" role="img" aria-label="Part model">
    <svg x="310" y="45" width="390" height="290" viewBox="0 0 1170 870">
      <g stroke="#3c4149" stroke-width="2.500" stroke-linejoin="round">
        <path d="M75 621L333 643 793 692 1054 720C1064 752 1057 825 1035 844L66 744Z" fill="url(#tubeFill)"/>
        <ellipse cx="69" cy="683" rx="18" ry="62" transform="rotate(4 69 683)" fill="#9299a5"/>
        <ellipse cx="69" cy="683" rx="12" ry="43" transform="rotate(6 69 683)" fill="#8c93a3"/>
        <path d="M72 645Q53 670 62 712Q80 705 72 645Z" fill="#c4cad6" stroke="none"/>
        <path d="M38 394C32 346 46 323 70 314L180 271Q210 270 200 300L190 336 133 358Z" fill="url(#curlFill)"/>
        <path d="M98 375L190 338C235 470 330 560 480 620L346 603Q356 632 333 643C225 590 145 490 98 375Z" fill="url(#underFill)"/>
        <path d="M346 603Q356 628 333 643C470 704 585 716 660 712 720 710 762 702 793 692 774 686 771 666 782 650L620 640 400 590Z" fill="url(#filletFill)"/>
        <path d="M346 603C450 650 620 690 782 650L700 630 380 560 320 575Z" fill="#535861" stroke="none"/>
        <path d="M752 581C824 550 866 500 915 422L944 402 1045 364 1020 410 950 480 860 560Z" fill="url(#curlFill)"/>
        <path d="M915 421L1010 386" fill="none"/>
        <path d="M1116 456L1016 493 1030 430 1058 420 1100 420Z" fill="#6a717b"/>
        <path d="M133 358C150 318 180 322 190 337Z" fill="#4d535c"/>
        <path d="M133 356C127 307 156 270 197 270 234 274 247 303 262 345 290 425 370 515 480 563 570 603 690 607 772 575 855 549 940 490 982 416 1005 379 1030 361 1060 362 1105 366 1128 405 1116 453 1105 420 1080 417 1060 428 1043 443 1035 467 1016 493 965 560 865 635 770 655 650 675 510 650 400 590 285 534 243 455 190 337 178 320 148 321 133 356Z" fill="url(#faceFill)"/>
      </g>
    </svg>
    <g class="axes">
      <path d="M508 104L509 76" stroke="#2525a8" stroke-width="1.500"/><path d="M506 81l3-10 3 10z" fill="#2525b8"/>
      <path d="M508 104l24 2" stroke="#b80c12" stroke-width="1.500"/><path d="M529 103l10 3-10 3z" fill="#c51016"/>
      <path d="M507 104l-6-1v2l-5 1 5 2z" fill="#16a51d"/>
      <circle cx="507.500" cy="103.500" r="3.500" fill="#e3d719" stroke="#776f17" stroke-width=".6"/>
      <text class="axis axis-z" x="506" y="66">Z</text><text class="axis axis-x" x="542" y="111">X</text><text class="axis axis-y" x="491" y="110">Y</text>
    </g>
    <g class="viewcube">
      <path d="M968 339l37 4-1 38-38-3-7 2 1-34zM968 339l-2 39" fill="#fbfafc" stroke="#999" stroke-width=".8"/>
      <path d="M981 362v-17" stroke="#6d72d4"/><path d="M979 349l2-5 2 5z" fill="#7377db"/>
      <path d="M981 362l14 1" stroke="#db8585"/><circle cx="981" cy="362" r="2" fill="#bed45b"/>
      <text class="front" x="971" y="363">FRONT</text><text class="left-face" transform="translate(965 367) rotate(-80)">Left</text>
    </g>
    <g><path d="M131 285v13l3-3 3 6 2-1-3-6h4z" fill="#fff" stroke="#527284"/><path d="M144 285v6M141 288h6" stroke="#18a62c" stroke-width="2.500"/><path d="M141 293h6" stroke="#d22525" stroke-width="2"/></g>
  </svg>

  <aside class="pathfinder" aria-label="PathFinder">
    <div class="grip"><i></i></div>
    <ul class="tree">
      <li class="root"><svg><use href="#i-part"/></svg><span class="node"><svg><use href="#i-lock"/></svg>Part2</span></li>
      <li><button class="expander" aria-label="Expand">+</button><span class="check"><input type="checkbox" aria-label="Show PMI"></span><span class="node muted"><svg><use href="#i-pmi"/></svg>PMI</span></li>
      <li><i class="expander-space"></i><span class="check"><input type="checkbox" checked aria-label="Show Base"></span><span class="node"><svg><use href="#i-base"/></svg>Base</span></li>
      <li><i class="expander-space"></i><span class="check"></span><span class="node"><svg><use href="#i-mat"/></svg>Material (None)</span></li>
      <li><button class="expander" aria-label="Expand">+</button><span class="check"><input type="checkbox" aria-label="Show planes"></span><span class="node muted"><svg><use href="#i-plane"/></svg>Base Reference Planes</span></li>
      <li><button class="expander" aria-label="Collapse">−</button><span class="check"><input type="checkbox" checked aria-label="Show bodies"></span><span class="node"><svg><use href="#i-bodies"/></svg>Design Bodies</span></li>
      <li class="level1"><i class="expander-space"></i><span class="check"><input type="checkbox" checked aria-label="Show body 1"></span><span class="node"><svg><use href="#i-body"/></svg>Design Body_1</span></li>
      <li><button class="expander" aria-label="Collapse">−</button><span class="sync"><svg><use href="#i-sync"/></svg>Synchronous<i class="pointer"></i></span></li>
      <li class="level1"><button class="expander" aria-label="Collapse">−</button><span class="check"></span><span class="node strong"><svg><use href="#i-feat"/></svg>Features</span></li>
      <li class="level2"><i class="expander-space"></i><span class="check"></span><span class="node strong"><svg><use href="#i-prot"/></svg>Protrusion 1</span></li>
      <li class="level2"><i class="expander-space"></i><span class="check"></span><span class="node strong"><svg><use href="#i-prot"/></svg>Protrusion 2</span></li>
      <li class="level2"><i class="expander-space"></i><span class="check"></span><span class="node strong"><svg><use href="#i-round"/></svg>Round 1</span></li>
      <li class="level1"><button class="expander" aria-label="Expand">+</button><span class="check"></span><span class="node strong"><svg><use href="#i-sketch"/></svg>Used Sketches</span></li>
    </ul>
  </aside>

  <div class="command-bar">
    <button class="cb-round" aria-label="Round"><svg><use href="#i-round"/></svg></button>
    <button class="cb-options" aria-label="Options"><svg><use href="#i-options"/></svg></button>
    <button class="cb-chain" aria-label="Selection type"><svg><use href="#i-select-chain"/></svg><span><svg class="caret"><use href="#i-caret"/></svg></span></button>
    <span class="picker chain"><select aria-label="Select by"><option>Chain</option></select><svg><path d="M1 2l3 3 3-3" fill="none" stroke="#555"/></svg></span>
  </div>
</main>

<section class="prompt" aria-label="Prompt bar">
  <div class="prompt-name"><svg><use href="#i-prompt"/></svg>PromptBar</div>
  <output class="prompt-text">Click on an edge chain.</output>
  <div class="prompt-tools">
    <button class="font-up" aria-label="Larger text">A</button><button class="font-down" aria-label="Smaller text">A</button><button aria-label="Collapse"><svg><use href="#i-up2"/></svg></button><button aria-label="Menu"><svg><use href="#i-overflow"/></svg></button><button aria-label="Pin"><svg><use href="#i-pin"/></svg></button><button aria-label="Close"><svg><use href="#i-x"/></svg></button>
  </div>
</section>

<footer class="status">
  <input class="find" type="text" placeholder="Find a command" aria-label="Find a command">
  <button aria-label="Go"><svg><use href="#i-go"/></svg></button>
  <button aria-label="Zoom area"><svg><use href="#i-zoomarea"/></svg></button>
  <button aria-label="Zoom"><svg><use href="#i-zoom"/></svg></button>
  <button aria-label="Fit"><svg><use href="#i-fit"/></svg></button>
  <button aria-label="Pan"><svg><use href="#i-pan"/></svg></button>
  <button aria-label="Rotate"><svg><use href="#i-rotate"/></svg></button>
  <button aria-label="Spin"><svg><use href="#i-spin"/></svg></button>
  <button aria-label="Views"><svg><use href="#i-view"/></svg></button>
  <button aria-label="View styles"><svg><use href="#i-layers"/></svg></button>
  <div class="zoom-control">
    <button aria-label="Zoom out"><svg><use href="#i-minus"/></svg></button>
    <input class="zoom-range" type="range" min="0" max="100" value="28" aria-label="Zoom level">
    <button aria-label="Zoom in"><svg><use href="#i-plus"/></svg></button>
  </div>
  <button aria-label="Video"><svg><use href="#i-video"/></svg></button>
  <button aria-label="Record"><svg><use href="#i-record"/></svg></button>
  <button aria-label="Upload"><svg><use href="#i-upload"/></svg></button>
</footer>
</body>
</html>
```
FILE: styles.css
```css
* { box-sizing: border-box; }
html, body { margin: 0; }
body {
  display: flex;
  flex-direction: column;
  min-height: 100vh;
  position: relative;
  background: #fdfdfe;
  color: #3c3c40;
  font: 8px/10px "Open Sans", "Noto Sans", sans-serif;
  overflow-x: hidden;
}
button, input, select { font: inherit; color: inherit; margin: 0; }
button { border: 0; padding: 0; background: none; display: flex; align-items: center; justify-content: center; white-space: nowrap; }
svg { display: block; flex: none; }
.defs { position: absolute; width: 0; height: 0; }
.caret { width: 5px; height: 5px; color: #777; }

.titlebar { display: grid; grid-template-columns: 1fr auto 1fr; align-items: center; height: 17px; }
.app-button { position: absolute; left: 0; top: 1px; width: 27px; height: 27px; border: 1px solid #6885a9; border-radius: 3px; background: #fbfcfe; }
.app-button svg { width: 22px; height: 22px; }
.quick { display: flex; align-items: center; gap: 3px; padding-left: 48px; height: 15px; }
.mini svg { width: 12px; height: 12px; }
.mini { width: 12px; }
.mini.wide { width: 16px; }
.mini .caret { width: 6px; height: 6px; color: #333; }
.bar { width: 1px; height: 12px; background: #dcdce2; }
.title { margin: 0; font-size: 8px; font-weight: 400; }
.window-buttons { display: flex; justify-content: flex-end; gap: 12px; padding-right: 4px; color: #444; }
.window-buttons svg { width: 8px; height: 8px; }

.tabrow { display: flex; align-items: center; height: 18px; border-bottom: 1px solid #dedee4; padding-left: 48px; }
.tabs { display: flex; height: 18px; flex: 1; }
.tab { padding: 0 9px; border: 1px solid transparent; }
.tab.active { background: #fdfdfe; border-color: #d5d8e0; border-bottom-color: #fdfdfe; color: #2b4a86; }
.brand { color: #0d9089; font-size: 11px; font-weight: 800; }
.help { display: flex; align-items: center; gap: 4px; margin-left: 42px; color: #222; }
.help svg { width: 8px; height: 8px; }
.help .face svg { width: 12px; height: 12px; }
.question { width: 11px; height: 12px; background: #2b5da6; color: #fff; font-size: 10px; font-weight: 700; }

.ribbon { display: flex; height: 62px; padding: 2px 0 4px; border-bottom: 1px solid #d8d8df; }
.group { display: flex; flex-direction: column; border-right: 1px solid #e0e0e5; }
.tools { display: flex; height: 46px; }
.caption { text-align: center; line-height: 8px; color: #77777c; }
.clipboard { width: 60px; padding-left: 2px; }
.selection { width: 53px; padding-left: 5px; }
.draw { width: 164px; padding-left: 3px; }
.solids { width: 166px; padding-left: 5px; }
.insert { width: 26px; }
.views { width: 75px; padding: 0 2px 0 5px; }
.styles { width: 106px; padding-left: 1px; }
.big { flex-direction: column; justify-content: flex-start; width: 31px; line-height: 8px; }
.big > svg:first-child { width: 22px; height: 28px; }
.big > .caret { margin-top: 3px; }
.double { width: 58px; }
.second { display: flex; align-items: center; gap: 1px; }
.draw .big > svg:first-child { width: 20px; }
.solids .big > svg:first-child { width: 24px; }
.disabled { color: #b5b5b9; }
.stack { display: grid; grid-template-rows: repeat(3, 15px); width: 22px; }
.small { justify-content: flex-start; gap: 3px; width: 22px; }
.small svg:first-child { width: 13px; height: 13px; }
.ruled { border-left: 1px solid #e0e0e5; padding-left: 3px; width: 26px; margin-left: 1px; }
.solids .stack .small { padding-left: 1px; }
.small.on { background: #c3d5ee; }
.tight .small { gap: 0; }
.tight { width: 18px; margin-left: 2px; }
.glyph svg { width: 16px; height: 16px; }
.pair { display: grid; grid-template-rows: 1fr 1fr; }
.pair .glyph svg { width: 13px; }
.cubes { display: grid; grid-template-columns: repeat(3, 1fr); grid-template-rows: 1fr 1fr; }
.chosen { background: #e4ebf6; border: 1px solid #a9bfdf; }
.column { flex-direction: column; }
.style-label { display: flex; align-items: center; gap: 2px; height: 15px; padding-left: 3px; }
.style-label svg { width: 11px; height: 10px; }
.picker { display: grid; align-items: center; }
.picker > * { grid-area: 1 / 1; }
.picker svg { justify-self: end; margin-right: 3px; pointer-events: none; }
.picker select { appearance: none; width: 100%; height: 15px; padding: 0 2px; border: 1px solid #a9a9b3; border-radius: 0; background: #fff; color: #222; }
.styles .picker { width: 101px; }
.styles .picker select { font-weight: 600; }
.styles .caption { text-align: left; padding-left: 6px; }

.commands { display: flex; padding-left: 213px; height: 18px; }
.command-strip { display: flex; align-items: center; gap: 4px; height: 16px; padding: 0 3px 0 7px; border: 1px solid #e2e2e8; border-top: 0; }
.command-strip svg { width: 12px; height: 12px; margin-right: 1px; }

.doc-row { display: flex; justify-content: space-between; height: 20px; border-bottom: 1px solid #8294ad; }
.doc-tab { display: flex; align-items: center; width: 66px; padding: 0 3px 0 10px; gap: 3px; border-top: 1px solid #3f69a8; border-right: 1px solid #b8c5d8; color: #3f6eaa; }
.doc-tab > svg { width: 11px; height: 11px; }
.doc-tab span { flex: 1; }
.doc-tab button svg { width: 6px; height: 6px; }
.doc-nav { display: flex; align-items: center; gap: 3px; color: #555; }
.doc-nav svg { width: 7px; height: 7px; }

.workspace { position: relative; flex: 1; display: flex; align-items: flex-start; gap: 38px; min-height: 410px; background: #f7f5f9; }
.canvas { position: absolute; inset: 0; width: 100%; height: 100%; }
.axis { font: 10px "Open Sans", sans-serif; }
.axis-z { fill: #242490; }
.axis-x { fill: #be1018; }
.axis-y { fill: #25b92d; }
.front { font: 9px "Open Sans", sans-serif; fill: #444; }
.left-face { font: 6px "Open Sans", sans-serif; fill: #888; }
.pathfinder { position: relative; width: 176px; color: #222; }
.grip { display: flex; align-items: center; justify-content: center; height: 6px; background: #c1c4cd; border: 1px solid #969aa5; border-left: 0; }
.grip i { width: 28px; border-top: 2px dotted #6e7482; }
.tree { list-style: none; margin: 1px 0 0; padding: 0; height: 148px; display: grid; grid-auto-rows: 1fr; }
.tree li { display: flex; align-items: center; padding-left: 4px; }
.tree .root { padding-left: 2px; gap: 1px; }
.tree svg { width: 10px; height: 10px; }
.tree .level1 { padding-left: 20px; }
.tree .level2 { padding-left: 33px; }
.expander { width: 7px; height: 7px; margin: 0 5px 0 4px; border: 1px solid #a6a8b0; background: #fff; font-size: 7px; line-height: 5px; }
.expander-space { width: 16px; }
.check { display: flex; width: 13px; }
.check input { appearance: none; width: 9px; height: 9px; border: 1px solid #777c86; background: #fff; }
.check input:checked { display: grid; place-items: center; }
.check input:checked::after { content: "✓"; font: 700 8px/8px "DejaVu Sans", sans-serif; color: #111; }
.node { display: flex; align-items: center; gap: 3px; height: 11px; padding-right: 4px; background: #f8f9fb; border-right: 1px solid #b9bec9; border-bottom: 1px solid #c3c7d0; white-space: nowrap; }
.muted { color: #8d8f96; }
.strong { font-weight: 600; }
.sync { display: flex; align-items: center; gap: 0; width: 131px; height: 10px; padding: 0 7px 0 3px; background: linear-gradient(#ffd36a, #efa72a); font-weight: 600; }
.pointer { margin-left: auto; border: 4px solid transparent; border-right: 12px solid #fff3d2; border-left: 0; }

.command-bar { position: relative; display: flex; align-items: center; gap: 4px; height: 28px; padding: 1px 2px; margin-top: 1px; background: #fdfdfe; border: 1px solid #3d5575; }
.cb-round { width: 29px; height: 25px; background: #f3a65a; border: 1px solid #c57f3a; }
.cb-round svg { width: 22px; height: 22px; }
.cb-options { width: 28px; height: 20px; background: #e7eef8; border: 1px solid #a9bddb; }
.cb-options svg { width: 20px; height: 17px; }
.cb-chain { width: 28px; height: 20px; background: #f8c27b; border: 1px solid #b2b6c0; }
.cb-chain > svg { width: 19px; height: 16px; }
.cb-chain span { display: flex; align-items: center; height: 100%; background: #fff; }
.cb-chain .caret { width: 7px; height: 7px; color: #111; }
.chain { width: 75px; }
.chain svg { width: 8px; height: 8px; }
.chain select { background: #dfdfe2; border-color: #bfbfc5; }

.prompt { display: flex; height: 17px; border-top: 1px solid #c6c5ca; }
.prompt-name { display: flex; align-items: center; gap: 3px; width: 66px; padding-left: 1px; color: #4273aa; }
.prompt-name svg { width: 15px; height: 7px; }
.prompt-text { flex: 1; padding: 0 1px; border-left: 1px solid #777; border-top: 1px solid #aaa; color: #222; font-size: 9px; line-height: 13px; background: #fff; }
.prompt-tools { display: flex; align-items: center; gap: 3px; padding-right: 1px; color: #222; }
.prompt-tools svg { width: 8px; height: 8px; }
.font-up { font: 700 11px/12px "Liberation Serif", serif; }
.font-down { font: 700 9px/12px "Liberation Serif", serif; }

.status { display: flex; align-items: center; justify-content: flex-end; gap: 4px; height: 14px; background: #264c8f; }
.status svg { width: 12px; height: 12px; }
.find { width: 100px; height: 12px; padding: 0 2px; border: 0; background: #fff; color: #333; line-height: 12px; }
.find::placeholder { color: #a4a4aa; }
.zoom-control { display: flex; align-items: center; gap: 1px; }
.zoom-range { appearance: none; width: 80px; height: 12px; background: linear-gradient(#b6c5df, #b6c5df) center / 100% 1px no-repeat; }
.zoom-range::-webkit-slider-thumb { appearance: none; width: 6px; height: 9px; border: 1px solid #e0e7f2; border-radius: 1px; background: #718cba; }
```
